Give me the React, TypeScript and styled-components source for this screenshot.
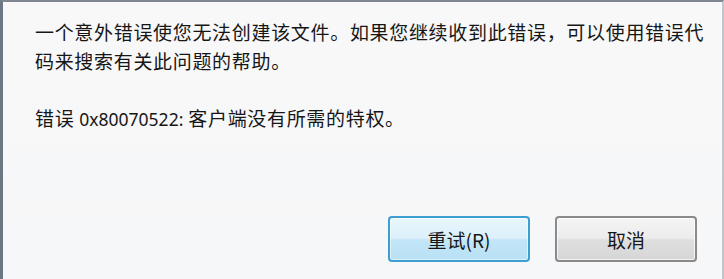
import React from "react";
import styled, { createGlobalStyle } from "styled-components";

const Global = createGlobalStyle`
  html, body { margin: 0; padding: 0; background: #f7f7f8; }
  body { font-family: "Noto Sans CJK SC", "Noto Sans", sans-serif; }
`;

const Dialog = styled.div`
  box-sizing: border-box;
  width: 724px;
  height: 279px;
  display: flex;
  flex-direction: column;
  background: linear-gradient(180deg, #f8f8f9 0%, #f6f7f8 100%);
  border-left: 3px solid #6b7785;
  border-top: 2px solid #7d8691;
  border-right: 2px solid #c2c5c9;
`;

const Message = styled.div`
  padding: 15px 0 0 32px;
  color: #161616;
  font-size: 19px;
  line-height: 29px;
  letter-spacing: 0.68px;
`;

const Paragraph = styled.p<{ $gap?: number }>`
  margin: 0 0 ${(p) => p.$gap ?? 0}px 0;
  white-space: nowrap;
`;

const Code = styled.span`
  font-family: "Noto Sans", sans-serif;
  font-size: 17.5px;
  letter-spacing: 0;
`;

const ButtonRow = styled.div`
  margin-top: auto;
  display: flex;
  justify-content: flex-end;
  gap: 25px;
  padding: 0 25px 17px 0;
`;

const Button = styled.button<{ $primary?: boolean }>`
  box-sizing: border-box;
  width: 142px;
  height: 46px;
  border-radius: 4px;
  font-family: "Noto Sans CJK SC", "Noto Sans", sans-serif;
  font-size: 19px;
  color: #161616;
  padding: 0;
  cursor: default;
  border: 2px solid ${(p) => (p.$primary ? "#3c9fd0" : "#8a8a8a")};
  background: ${(p) =>
    p.$primary
      ? "linear-gradient(180deg, #e9f6fd 0%, #dcf0fb 48%, #c3e6f8 52%, #b9e0f5 100%)"
      : "linear-gradient(180deg, #f4f4f4 0%, #ececec 48%, #dfdfdf 52%, #d6d6d6 100%)"};
  box-shadow: inset 0 0 0 1px ${(p) => (p.$primary ? "rgba(255,255,255,0.55)" : "rgba(255,255,255,0.7)")};
`;

export default function App() {
  return (
    <>
      <Global />
      <Dialog>
        <Message>
          <Paragraph>
            一个意外错误使您无法创建该文件。如果您继续收到此错误，可以使用错误代
          </Paragraph>
          <Paragraph $gap={28}>码来搜索有关此问题的帮助。</Paragraph>
          <Paragraph>
            错误 <Code>0x80070522:</Code> 客户端没有所需的特权。
          </Paragraph>
        </Message>
        <ButtonRow>
          <Button $primary>重试(R)</Button>
          <Button>取消</Button>
        </ButtonRow>
      </Dialog>
    </>
  );
}
